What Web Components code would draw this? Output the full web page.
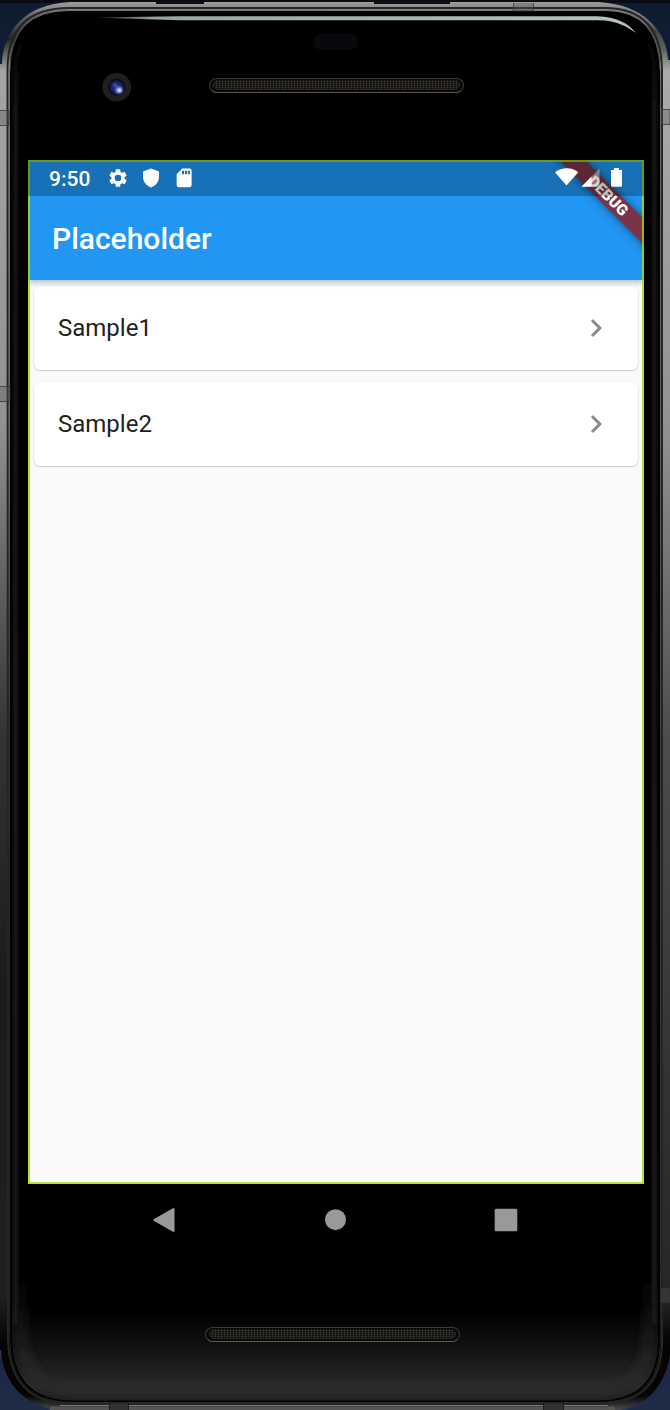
<!DOCTYPE html>
<html lang="en">
<head>
<meta charset="utf-8">
<title>Placeholder</title>
<style>
html,body{margin:0;height:100%;background:#000}
body{font-family:Roboto,"Liberation Sans",sans-serif;overflow:hidden}
</style>
</head>
<body>
<device-frame>
  <device-top slot="top"></device-top>
  <app-screen slot="screen">
    <status-bar slot="status" time="9:50"></status-bar>
    <app-bar slot="bar">Placeholder</app-bar>
    <list-card>Sample1</list-card>
    <list-card>Sample2</list-card>
    <debug-banner slot="banner">DEBUG</debug-banner>
  </app-screen>
  <nav-bar slot="nav"></nav-bar>
  <speaker-grille slot="bottom"></speaker-grille>
</device-frame>
<script>
const define = (name, html, setup) => customElements.define(name, class extends HTMLElement {
  constructor() {
    super();
    this.attachShadow({mode: 'open'}).innerHTML = html;
  }
  connectedCallback() { if (setup) setup(this); }
});

define('device-frame', `
<style>
:host{display:grid;grid-template:160px 1024px 72px 154px / 1fr;position:relative;width:670px;height:1410px;background:#101b30;overflow:hidden}
.shell{position:absolute;inset:0;display:block}
.top,.screen,.nav,.bottom{position:relative;min-width:0}
.screen{padding:0 26px 0 28px}
.bottom{padding:71px 0 0 205px}
</style>
<svg class="shell" width="670" height="1410" viewBox="0 0 670 1410">
  <defs>
    <linearGradient id="night" x2="0" y2="1"><stop offset="0" stop-color="#0f1b32"/><stop offset=".95" stop-color="#404d68"/><stop offset=".965" stop-color="#1b2845"/><stop offset="1" stop-color="#202b46"/></linearGradient>
    <linearGradient id="metalL" gradientUnits="userSpaceOnUse" x1="0" y1="0" x2="0" y2="1410"><stop offset="0" stop-color="#a2a2a2"/><stop offset=".006" stop-color="#888"/><stop offset=".012" stop-color="#606060"/><stop offset=".028" stop-color="#242424"/><stop offset=".036" stop-color="#555"/><stop offset=".05" stop-color="#a4a4a4"/><stop offset=".3" stop-color="#929292"/><stop offset=".4" stop-color="#666"/><stop offset=".52" stop-color="#343434"/><stop offset=".7" stop-color="#1b1b1b"/><stop offset=".92" stop-color="#202020"/><stop offset=".95" stop-color="#050505"/><stop offset=".99" stop-color="#050505"/><stop offset="1" stop-color="#4a4a4a"/></linearGradient>
    <linearGradient id="metalR" gradientUnits="userSpaceOnUse" x1="0" y1="0" x2="0" y2="1410"><stop offset="0" stop-color="#a2a2a2"/><stop offset=".006" stop-color="#888"/><stop offset=".014" stop-color="#777"/><stop offset=".022" stop-color="#444"/><stop offset=".035" stop-color="#606060"/><stop offset=".05" stop-color="#aaa"/><stop offset=".3" stop-color="#929292"/><stop offset=".4" stop-color="#747474"/><stop offset=".52" stop-color="#4d4d4d"/><stop offset=".75" stop-color="#343434"/><stop offset=".92" stop-color="#262626"/><stop offset=".95" stop-color="#050505"/><stop offset=".99" stop-color="#050505"/><stop offset="1" stop-color="#4a4a4a"/></linearGradient>
    <linearGradient id="sheen" gradientUnits="userSpaceOnUse" x1="0" y1="1310" x2="0" y2="1402"><stop offset="0" stop-color="#000"/><stop offset=".4" stop-color="#111"/><stop offset=".84" stop-color="#2a2a2a"/><stop offset="1" stop-color="#171717"/></linearGradient>
    <linearGradient id="glint"><stop offset="0" stop-color="#b5c2c2" stop-opacity="0"/><stop offset=".12" stop-color="#9aa5a5"/><stop offset="1" stop-color="#b5c2c2"/></linearGradient>
    <linearGradient id="edge" gradientUnits="userSpaceOnUse" x1="0" y1="0" x2="0" y2="1410"><stop offset="0" stop-color="#777"/><stop offset=".02" stop-color="#666"/><stop offset=".06" stop-color="#303030"/><stop offset=".9" stop-color="#2c2c2c"/><stop offset="1" stop-color="#333"/></linearGradient>
    <linearGradient id="rim" gradientUnits="userSpaceOnUse" x1="0" y1="30" x2="0" y2="1410"><stop offset="0" stop-color="#1c1c1c" stop-opacity="0"/><stop offset=".06" stop-color="#1c1c1c"/><stop offset="1" stop-color="#1e1e1e"/></linearGradient>
    <linearGradient id="foot" gradientUnits="userSpaceOnUse" x1="0" y1="1270" x2="0" y2="1400"><stop offset="0" stop-color="#262626" stop-opacity="0"/><stop offset="1" stop-color="#2b2b2b"/></linearGradient>
    <filter id="soft" x="-5%" y="-5%" width="110%" height="110%"><feGaussianBlur stdDeviation="1.500"/></filter>
    <filter id="softer" x="-5%" y="-20%" width="110%" height="140%"><feGaussianBlur stdDeviation="5"/></filter>
    <clipPath id="left"><path d="M0 0H335V1410H0z"/></clipPath>
    <clipPath id="right"><path d="M335 0H670V1410H335z"/></clipPath>
    <clipPath id="glass"><path d="M10 70Q10 11 69 11H605Q660 11 660 72V1345Q658 1402 598 1402H73Q12 1402 10 1340z"/></clipPath>
  </defs>
  <path fill="url(#night)" d="M0 0H670V1410H0z"/>
  <path fill="#090d13" d="M0 0H670V3H0z"/>
  <path clip-path="url(#left)" fill="url(#metalL)" d="M0 64H2C3 31 25 4 70 2H598C643 4 667 31 668 60H670V1354C665 1389 643 1410 610 1411H58C29 1406 3 1387 1 1350H0z"/>
  <path clip-path="url(#right)" fill="url(#metalR)" d="M0 64H2C3 31 25 4 70 2H598C643 4 667 31 668 60H670V1354C665 1389 643 1410 610 1411H58C29 1406 3 1387 1 1350H0z"/>
  <path fill="#090d13" d="M156 0H204V4H156zM374 0H450V4H374z"/>
  <path fill="none" stroke="#252525" stroke-width="2" d="M7.500 70Q7.500 8 69 8H605Q662 8 662 72V1345Q660 1404 598 1404H73Q10 1404 8 1340z"/>
  <path fill="#000" stroke="url(#edge)" d="M10 70Q10 10.500 69 10.500H605Q660 10.500 660 72V1345Q658 1402 598 1402H73Q12 1402 10 1340z"/>
  <g clip-path="url(#glass)">
    <path fill="url(#sheen)" d="M12 1310H659V1402H12z"/>
    <path filter="url(#softer)" fill="none" stroke="url(#foot)" stroke-width="12" d="M21 1270V1335Q24 1390 78 1392H593Q646 1390 649 1340V1270"/>
    <path filter="url(#soft)" fill="none" stroke="url(#rim)" stroke-width="4" d="M28 35Q15 48 15.500 75V1325M642 35Q655 48 654.500 75V1325"/>
    <path fill="none" stroke="#000" stroke-width="2" d="M11 70V1340Q13 1401.500 73 1401.500H598Q657 1401.500 659 1343V70"/>
  </g>
  <path fill="url(#glint)" d="M90 17.500L180 16.200H597C617 17 628 23 636 33C627 27 617 20 597 20.300H180z"/>
  <g fill="#555" fill-opacity=".35" stroke="#333" stroke-opacity=".75"><path d="M0 110.500H9V125.500H0M0 386.500H10V401.500H0M661 109.500H670V124.500H661M513.500 3V11H533.500V3"/><path d="M661 1288.500H670V1302.500H661"/></g>
  <path stroke="#777" d="M60 1405.500H608"/>
  <path stroke="#555" stroke-width="4" d="M50 1408.500H615"/>
  <path fill="#333" stroke="#1c1c1c" d="M109.500 1403V1411H128.500V1403zM543.500 1403V1411H563.500V1403z"/>
</svg>
<div class="top"><slot name="top"></slot></div>
<div class="screen"><slot name="screen"></slot></div>
<div class="nav"><slot name="nav"></slot></div>
<div class="bottom"><slot name="bottom"></slot></div>`);

define('speaker-grille', `
<style>
:host{display:block;box-sizing:border-box;width:255px;height:15px;border:1.500px solid #3b3a38;border-bottom-color:#5c5853;border-radius:8px;padding:1px 3px;background:#080807}
i{display:block;height:10px;border-radius:5px;background:repeating-linear-gradient(90deg,#302c27 0 1px,transparent 1px 3px),repeating-linear-gradient(0deg,#25231f 0 1px,#0f0e0c 1px 2px)}
</style><i></i>`);

define('device-top', `
<style>
:host{display:grid;grid-template-columns:102px 30px 76px 256px;grid-template-rows:33px 17px 20px 34px;align-items:center}
.sensor{grid-area:2/4;width:45px;height:16px;border-radius:8px;background:#08090d;margin-left:105px}
svg{grid-area:4/2;display:block}
speaker-grille{grid-area:4/4;margin-top:-4px;margin-left:1px}
</style>
<div class="sensor"></div>
<svg width="30" height="34" viewBox="0 0 30 34"><defs><radialGradient id="lens"><stop stop-color="#22338c"/><stop offset=".65" stop-color="#141f52"/><stop offset="1" stop-color="#05060e"/></radialGradient><filter id="b" x="-50%" y="-50%" width="200%" height="200%"><feGaussianBlur stdDeviation=".9"/></filter></defs><circle cx="14.700" cy="17.200" r="14.300" fill="#211e1f"/><circle cx="14.700" cy="17.200" r="8.500" fill="url(#lens)"/><g filter="url(#b)"><circle cx="17" cy="20" r="3.600" fill="#5e76e0"/><circle cx="17.500" cy="20.300" r="1.900" fill="#eef1ff"/><circle cx="13" cy="15" r="1.800" fill="#4b63c7"/></g></svg>
<speaker-grille></speaker-grille>`);

define('app-screen', `
<style>
:host{display:grid;grid-template:36px 84px 904px / 100%;position:relative;height:1024px;background:#fafafa;overflow:hidden}
.bar{grid-area:1/1/3/2;z-index:1}
.status{grid-area:1/1;z-index:4}
.list{grid-area:3/1;padding:6px 6px 0;display:flex;flex-direction:column;gap:12px}
.ring{position:absolute;inset:0;border:2px solid rgba(165,220,0,.8);z-index:3}
</style>
<div class="bar"><slot name="bar"></slot></div>
<div class="list"><slot></slot></div>
<slot name="banner"></slot>
<div class="ring"></div>
<div class="status"><slot name="status"></slot></div>`);

define('status-bar', `
<style>
:host{display:flex;align-items:center;box-sizing:border-box;height:36px;padding:0 21px 0 21px;background:rgba(0,0,0,.25);color:#fff;font-size:21px;font-weight:500}
span{width:57.500px;line-height:34px;padding-top:2px}
svg{display:block;fill:#fff;flex:none}
.sys{display:flex;gap:11px}
.radio{margin-left:auto}
</style>
<span></span>
<div class="sys">
<svg width="22" height="22" viewBox="0 0 24 24"><path d="M19.140 12.940c.04-.3.060-.61.060-.94s-.02-.64-.07-.94l2.030-1.580c.18-.14.23-.41.120-.61l-1.920-3.320c-.12-.22-.37-.29-.59-.22l-2.390.96c-.5-.38-1.030-.7-1.620-.94L14.400 2.810c-.04-.24-.24-.41-.48-.41h-3.840c-.24 0-.43.17-.47.410L9.250 5.350c-.59.24-1.130.57-1.620.94L5.240 5.330c-.22-.08-.47 0-.59.220L2.740 8.870c-.12.210-.08.470.120.610l2.030 1.580c-.05.3-.09.630-.09.940s.02.640.070.940l-2.030 1.580c-.18.14-.23.410-.12.610l1.920 3.320c.12.220.37.290.59.220l2.390-.96c.5.380 1.030.7 1.620.940l.36 2.540c.05.240.24.410.480.410h3.840c.24 0 .44-.17.470-.41l.36-2.540c.59-.24 1.130-.56 1.620-.94l2.390.96c.22.080.47 0 .59-.22l1.920-3.320c.12-.22.070-.47-.12-.61zM12 15.600A3.600 3.600 0 1 1 12 8.400a3.600 3.600 0 0 1 0 7.200z"/></svg>
<svg width="22" height="22" viewBox="0 0 24 24"><path d="M12 1.700L20.700 5V11C20.700 16.300 17 20.800 12 22.300C7 20.800 3.300 16.300 3.300 11V5z"/></svg>
<svg width="22" height="22" viewBox="0 0 24 24"><path d="M18.300 1.700H10L4 7.800V20a2 2 0 0 0 2 2H18.300a2 2 0 0 0 2-2V3.700a2 2 0 0 0-2-2zM12 8H9.800V4H12zm3.200 0H13V4h2.200zm3.200 0h-2.200V4h2.200z"/></svg>
</div>
<svg class="radio" width="68" height="24" viewBox="0 0 68 24"><path d="M0 6.200C7 .8 17 .8 23.300 6.200L11.500 19.500z"/><path d="M26.500 20.700H44.500V2.500z" opacity=".35"/><path d="M26.500 20.700H36.500V10.500z"/><path d="M56 4H59V2H64V4H67V19.500q0 1.300-1.300 1.300H57.300q-1.300 0-1.300-1.300z"/></svg>`,
el => el.shadowRoot.querySelector('span').textContent = el.getAttribute('time'));

define('app-bar', `
<style>
:host{display:flex;align-items:center;box-sizing:border-box;height:120px;padding:36px 24px 0;background:#2196f3;color:#fff;font-size:30px;font-weight:500;box-shadow:0 2px 5px rgba(0,0,0,.18),0 1px 8px rgba(0,0,0,.14)}
h1{font:inherit;margin:0;padding-top:2px;line-height:36px}
</style><h1><slot></slot></h1>`);

define('list-card', `
<style>
:host{display:flex;align-items:center;justify-content:space-between;box-sizing:border-box;height:84px;padding:0 24px;border-radius:6px;background:#fff;color:#212121;font-size:24px;box-shadow:0 1px 1.500px rgba(0,0,0,.16),0 0 2px rgba(0,0,0,.1)}
svg{display:block;fill:#8b8b8b}
</style><span><slot></slot></span><svg width="36" height="36" viewBox="0 0 24 24"><path d="M10 6L8.590 7.410 13.170 12l-4.580 4.590L10 18l6-6z"/></svg>`);

define('debug-banner', `
<style>
:host{position:absolute;z-index:2;left:500px;top:27px;width:160px;height:18px;line-height:18px;text-align:center;transform:rotate(45deg);background:rgba(145,26,30,.8);color:#fff;font-size:15.300px;font-weight:900;box-shadow:0 0 9px rgba(0,0,0,.5)}
</style><slot></slot>`);

define('nav-bar', `
<style>
:host{display:flex;align-items:center;height:72px;padding:0 152px;justify-content:space-between}
svg{display:block;fill:#999}
</style>
<svg width="24" height="26" viewBox="0 0 24 26"><path d="M2 12L21 1.200Q22.500.5 22.500 2V24Q22.500 25.500 21 24.700L2 14Q.3 13 2 12z"/></svg>
<svg width="22" height="22" viewBox="0 0 22 22"><circle cx="11.500" cy="10.700" r="10.500"/></svg>
<svg width="24" height="24" viewBox="0 0 24 24"><rect x=".7" y=".7" width="22.600" height="22.600" rx="1.500"/></svg>`);
</script>
</body>
</html>
